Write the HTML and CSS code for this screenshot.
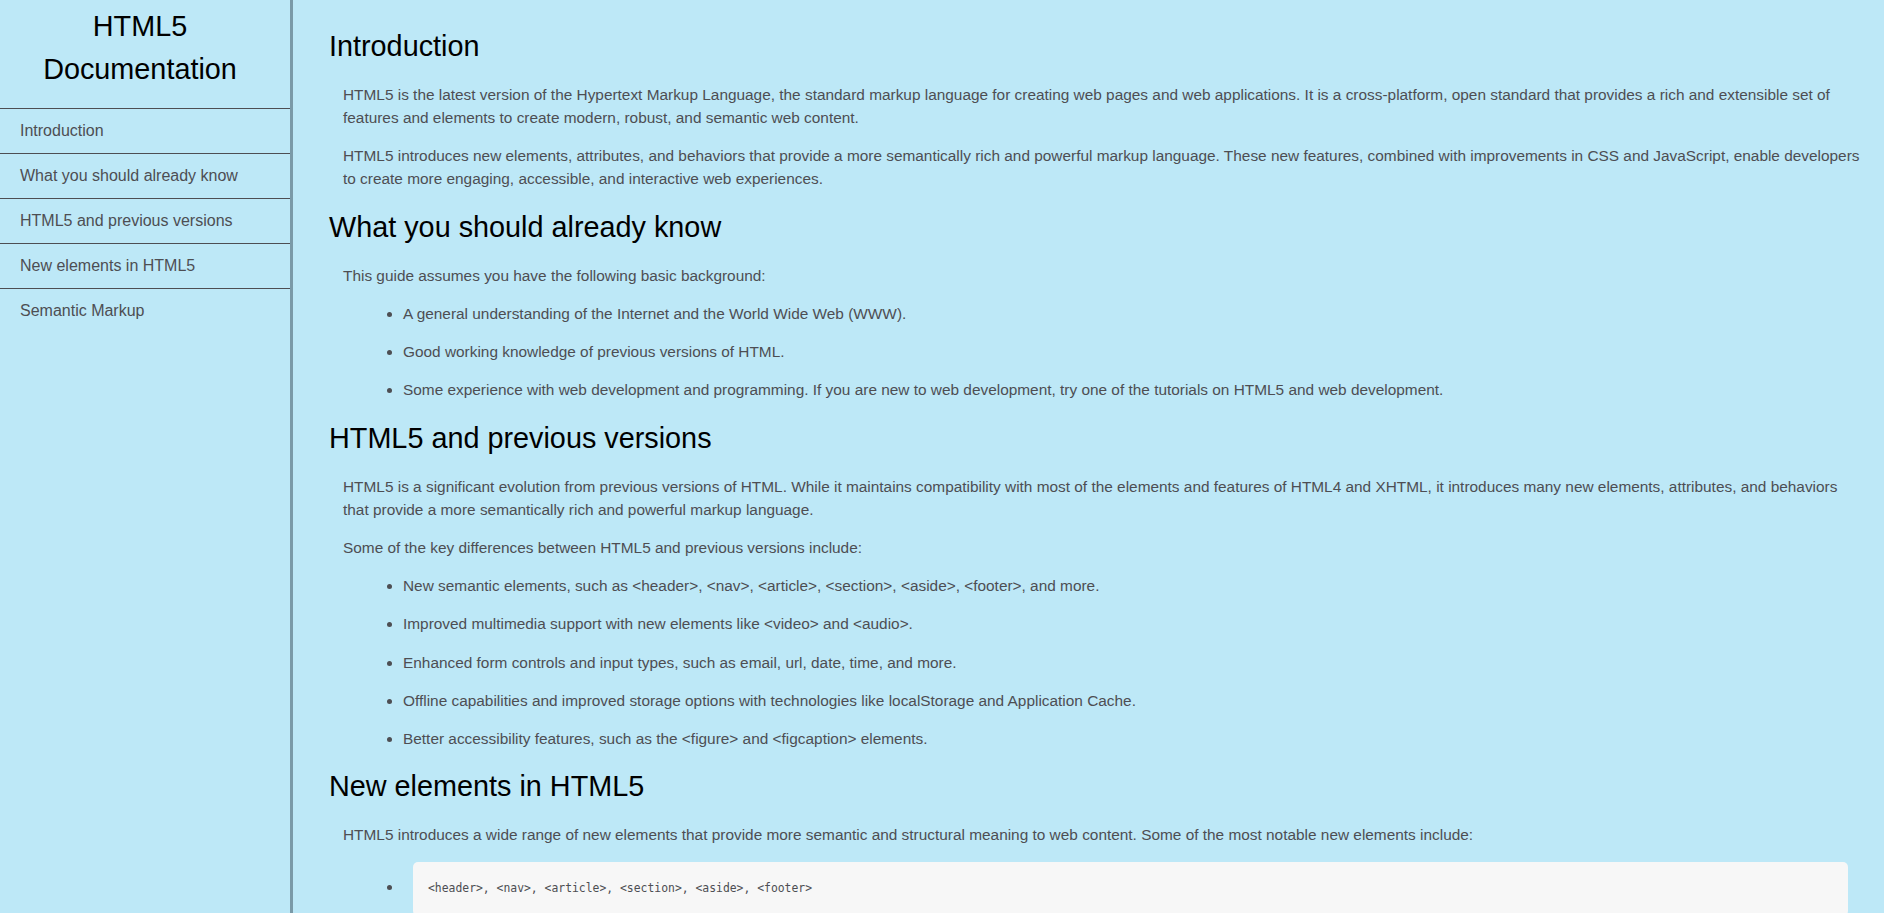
FILE: index.html
```html
<!DOCTYPE html>
<html lang="en">
<head>
<meta charset="utf-8">
<title>HTML5 Documentation</title>
<link rel="stylesheet" href="styles.css">
</head>
<body>
<nav id="navbar" class="navbar">
  <header class="nav-title">HTML5 Documentation</header>
  <a class="nav-link" href="#Introduction">Introduction</a>
  <a class="nav-link" href="#What_you_should_already_know">What you should already know</a>
  <a class="nav-link" href="#HTML5_and_previous_versions">HTML5 and previous versions</a>
  <a class="nav-link" href="#New_elements_in_HTML5">New elements in HTML5</a>
  <a class="nav-link" href="#Semantic_Markup">Semantic Markup</a>
</nav>
<main id="main-doc" class="main-doc">
  <section class="main-section" id="Introduction">
    <header class="section-title">Introduction</header>
    <p>HTML5 is the latest version of the Hypertext Markup Language, the standard markup language for creating web pages and web applications. It is a cross-platform, open standard that provides a rich and extensible set of features and elements to create modern, robust, and semantic web content.</p>
    <p>HTML5 introduces new elements, attributes, and behaviors that provide a more semantically rich and powerful markup language. These new features, combined with improvements in CSS and JavaScript, enable developers to create more engaging, accessible, and interactive web experiences.</p>
  </section>
  <section class="main-section" id="What_you_should_already_know">
    <header class="section-title">What you should already know</header>
    <p>This guide assumes you have the following basic background:</p>
    <ul class="list">
      <li>A general understanding of the Internet and the World Wide Web (WWW).</li>
      <li>Good working knowledge of previous versions of HTML.</li>
      <li>Some experience with web development and programming. If you are new to web development, try one of the tutorials on HTML5 and web development.</li>
    </ul>
  </section>
  <section class="main-section" id="HTML5_and_previous_versions">
    <header class="section-title">HTML5 and previous versions</header>
    <p>HTML5 is a significant evolution from previous versions of HTML. While it maintains compatibility with most of the elements and features of HTML4 and XHTML, it introduces many new elements, attributes, and behaviors that provide a more semantically rich and powerful markup language.</p>
    <p>Some of the key differences between HTML5 and previous versions include:</p>
    <ul class="list">
      <li>New semantic elements, such as &lt;header&gt;, &lt;nav&gt;, &lt;article&gt;, &lt;section&gt;, &lt;aside&gt;, &lt;footer&gt;, and more.</li>
      <li>Improved multimedia support with new elements like &lt;video&gt; and &lt;audio&gt;.</li>
      <li>Enhanced form controls and input types, such as email, url, date, time, and more.</li>
      <li>Offline capabilities and improved storage options with technologies like localStorage and Application Cache.</li>
      <li>Better accessibility features, such as the &lt;figure&gt; and &lt;figcaption&gt; elements.</li>
    </ul>
  </section>
  <section class="main-section" id="New_elements_in_HTML5">
    <header class="section-title">New elements in HTML5</header>
    <p>HTML5 introduces a wide range of new elements that provide more semantic and structural meaning to web content. Some of the most notable new elements include:</p>
    <ul class="list">
      <li><pre class="code"><code>&lt;header&gt;, &lt;nav&gt;, &lt;article&gt;, &lt;section&gt;, &lt;aside&gt;, &lt;footer&gt;</code></pre></li>
      <li><pre class="code"><code>&lt;video&gt;, &lt;audio&gt;, &lt;canvas&gt;</code></pre></li>
      <li><pre class="code"><code>&lt;figure&gt;, &lt;figcaption&gt;, &lt;mark&gt;, &lt;time&gt;</code></pre></li>
    </ul>
  </section>
  <section class="main-section" id="Semantic_Markup">
    <header class="section-title">Semantic Markup</header>
    <p>Semantic markup is the practice of using HTML elements that describe the meaning of the content they contain, rather than only its appearance.</p>
  </section>
</main>
</body>
</html>
```
FILE: styles.css
```css
html, body {
  margin: 0;
  padding: 0;
}

body {
  background: #bde8f7;
  font-family: "Liberation Sans", Arial, sans-serif;
  color: #4d4e53;
}

.navbar {
  position: fixed;
  top: 0;
  left: 0;
  width: 290px;
  height: 100vh;
  border-right: 3px solid #7a9aa8;
  background: #bde8f7;
  display: flex;
  flex-direction: column;
}

.nav-title {
  font-size: 28.8px;
  line-height: 43px;
  color: #000;
  text-align: center;
  padding: 5px 10px 17px 0;
}

.nav-link {
  display: block;
  border-top: 1px solid #4d4e53;
  line-height: 44px;
  padding-left: 20px;
  font-size: 16px;
  color: #4d4e53;
  text-decoration: none;
}

.main-doc {
  margin-left: 293px;
  padding: 10px 20px 40px 36px;
}

.main-section {
  display: block;
}

.section-title {
  display: block;
  font-size: 28.8px;
  line-height: 33px;
  color: #000;
  margin: 20px 0 20px;
}

.main-section p {
  font-size: 15.4px;
  line-height: 23.1px;
  margin: 0 0 15.2px 14px;
}

.list {
  margin: 0 0 0 14px;
  padding-left: 60px;
  font-size: 15.4px;
  line-height: 23.1px;
}

.list li {
  margin-bottom: 15.2px;
}

.code {
  margin: 0 16px 0 10px;
  padding: 18px 15px;
  background: #f7f7f7;
  border-radius: 5px;
  font-family: "Liberation Mono", "DejaVu Sans Mono", monospace;
  font-size: 11.4px;
  line-height: 1.5;
  color: #4d4e53;
}
```
